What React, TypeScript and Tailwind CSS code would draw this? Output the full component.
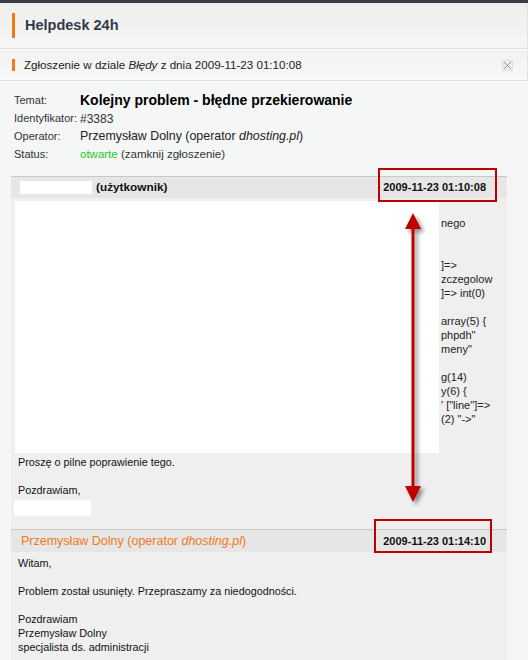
import React from "react";

const hidden = [
  "nego",
  "",
  "",
  "]=>",
  "zczegolow",
  "]=> int(0)",
  "",
  " array(5) {",
  "phpdh\"",
  "meny\"",
  "",
  "g(14)",
  "y(6) {",
  "' [\"line\"]=>",
  "(2) \"->\"",
];

export default function App() {
  return (
    <div
      className="relative w-[528px] h-[660px] overflow-hidden bg-[#f4f5f5] text-[#222]"
      style={{ fontFamily: '"Liberation Sans", Arial, sans-serif' }}
    >
      <div className="h-[3px] bg-[#3a3e48]" />
      {/* header */}
      <div className="h-[45px] flex items-center bg-gradient-to-b from-[#eeeeee] to-[#f6f6f6] border-r border-[#e2e2e2]">
        <div className="ml-[12px] w-[3px] h-[25px] bg-[#f07a1a]" />
        <div className="ml-[10px] text-[14.5px] font-bold text-[#333a46]">Helpdesk 24h</div>
      </div>
      <div className="h-[2px] border-t border-[#dedede] bg-white" />
      {/* section title */}
      <div className="h-[30px] flex items-center bg-gradient-to-b from-[#f2f2f2] to-[#f8f8f8] border-r border-[#e2e2e2]">
        <div className="ml-[12px] w-[3px] h-[12px] bg-[#f07a1a]" />
        <div className="ml-[9px] text-[11.6px] text-[#222] flex-1">
          Zgłoszenie w dziale <i>Błędy</i> z dnia 2009-11-23 01:10:08
        </div>
        <div className="mr-[14px] w-[11px] h-[11px] bg-[#ececec] border border-[#e0e0e0] flex items-center justify-center">
          <svg width="9" height="9" viewBox="0 0 9 9">
            <path d="M1 1 L8 8 M8 1 L1 8" stroke="#888" strokeWidth="0.9" />
          </svg>
        </div>
      </div>
      <div className="h-[2px] border-t border-[#dedede] bg-white" />

      {/* content */}
      <div className="w-[507px] bg-[#f5f6f6] pl-[11px] pt-[9px]">
        <div className="pl-[3px] text-[11px] text-[#333]">
          <div className="flex items-center h-[19px]">
            <div className="w-[66px]">Temat:</div>
            <div className="text-[14px] font-bold text-black">Kolejny problem - błędne przekierowanie</div>
          </div>
          <div className="flex items-center h-[17px]">
            <div className="w-[66px]">Identyfikator:</div>
            <div className="text-[12px]">#3383</div>
          </div>
          <div className="flex items-center h-[18px]">
            <div className="w-[66px]">Operator:</div>
            <div className="text-[12.4px] text-[#222]">
              Przemysław Dolny (operator <i>dhosting.pl</i>)
            </div>
          </div>
          <div className="flex items-center h-[19px]">
            <div className="w-[66px]">Status:</div>
            <div className="text-[11.5px]">
              <span className="text-[#22cc22]">otwarte</span> (zamknij zgłoszenie)
            </div>
          </div>
        </div>

        {/* message 1 */}
        <div className="mt-[12px] border-t border-[#c9c9c9]">
          <div className="h-[21px] bg-[#e6e6e6] flex items-center text-[11px] font-bold text-[#111]">
            <div className="ml-[9px] w-[72px] h-[13px] bg-white" />
            <div className="ml-[4px] flex-1 text-[11.8px]">(użytkownik)</div>
            <div className="mr-[21px]">2009-11-23 01:10:08</div>
          </div>
          <div className="bg-[#efefef] pb-[13px]">
            <div className="flex pt-[3px]">
              <div className="ml-[4px] w-[424px] h-[252px] bg-white shrink-0" />
              <div className="pl-[2px] pt-[15px] text-[11px] leading-[14px] text-[#222]">
                {hidden.map((h, i) => (
                  <div key={i} className="h-[14px] whitespace-nowrap">
                    {h}
                  </div>
                ))}
              </div>
            </div>
            <div className="pl-[7px] pt-[2px] text-[10.8px] leading-[14px] text-[#111]">
              <div>Proszę o pilne poprawienie tego.</div>
              <div className="h-[14px]" />
              <div>Pozdrawiam,</div>
            </div>
            <div className="ml-[3px] mt-[3px] w-[77px] h-[16px] bg-white" />
          </div>
        </div>

        {/* message 2 */}
        <div className="border-t border-[#c9c9c9]">
          <div className="h-[22px] bg-[#e6e6e6] flex items-center text-[11px]">
            <div className="ml-[10px] flex-1 text-[12.5px] text-[#f07a20]">
              Przemysław Dolny (operator <i>dhosting.pl</i>)
            </div>
            <div className="mr-[21px] font-bold text-[#111]">2009-11-23 01:14:10</div>
          </div>
          <div className="bg-[#efefef] pl-[7px] pt-[4px] pb-[20px] text-[10.8px] leading-[14px] text-[#111]">
            <div>Witam,</div>
            <div className="h-[14px]" />
            <div>Problem został usunięty. Przepraszamy za niedogodności.</div>
            <div className="h-[14px]" />
            <div>Pozdrawiam</div>
            <div>Przemysław Dolny</div>
            <div>specjalista ds. administracji</div>
          </div>
        </div>
      </div>

      {/* annotations */}
      <div className="absolute left-[378px] top-[168px] w-[119px] h-[34px] border-2 border-[#c00000]" />
      <div className="absolute left-[374px] top-[519px] w-[118px] h-[34px] border-2 border-[#c00000]" />
      <svg className="absolute left-[398px] top-[205px]" width="40" height="310" viewBox="0 0 40 310">
        <defs>
          <filter id="sh" x="-50%" y="-10%" width="200%" height="120%">
            <feGaussianBlur in="SourceAlpha" stdDeviation="2" />
            <feOffset dx="3" dy="3" result="b" />
            <feComponentTransfer>
              <feFuncA type="linear" slope="0.45" />
            </feComponentTransfer>
            <feMerge>
              <feMergeNode />
              <feMergeNode in="SourceGraphic" />
            </feMerge>
          </filter>
        </defs>
        <g filter="url(#sh)">
          <rect x="13.5" y="20" width="3" height="266" fill="#c00000" />
          <path d="M15 8 L23 24 L7 24 Z" fill="#c00000" />
          <path d="M15 297 L23 281 L7 281 Z" fill="#c00000" />
        </g>
      </svg>
    </div>
  );
}
